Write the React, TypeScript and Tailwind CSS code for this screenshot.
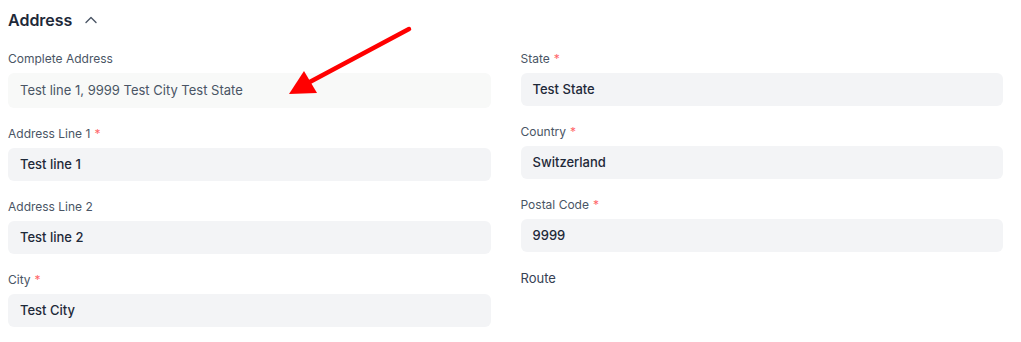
import { ReactNode } from 'react';

type Field = {
  label: string;
  value?: string;
  required?: boolean;
  readOnly?: boolean;
  plain?: boolean;
};

const LEFT: Field[] = [
  { label: 'Complete Address', value: 'Test line 1, 9999 Test City Test State', readOnly: true },
  { label: 'Address Line 1', value: 'Test line 1', required: true },
  { label: 'Address Line 2', value: 'Test line 2' },
  { label: 'City', value: 'Test City', required: true }
];

const RIGHT: Field[] = [
  { label: 'State', value: 'Test State', required: true },
  { label: 'Country', value: 'Switzerland', required: true },
  { label: 'Postal Code', value: '9999', required: true },
  { label: 'Route', plain: true }
];

function FieldBlock({ field }: { field: Field }): ReactNode {
  if (field.plain) {
    return <div className="text-[13px] leading-4 text-gray-700">{field.label}</div>;
  }
  return (
    <div>
      <div className="text-xs leading-4 text-gray-600 mb-[6px]">
        {field.label}
        {field.required && <span className="text-red-400 ml-1">*</span>}
      </div>
      {field.readOnly ? (
        <div className="h-[35px] rounded-md bg-[#f8f9f8] px-3 flex items-center text-[13px] text-gray-600">
          {field.value}
        </div>
      ) : (
        <div className="h-[33px] rounded-md bg-gray-100 px-3 flex items-center text-[13px] font-medium text-gray-800">
          {field.value}
        </div>
      )}
    </div>
  );
}

export default function App() {
  return (
    <div
      className="relative w-[1021px] h-[342px] bg-white pl-2 pr-[18px] pt-2 overflow-hidden"
      style={{ fontFamily: 'Inter, "Noto Sans", sans-serif' }}
    >
      <div className="flex items-center gap-3 h-6 mb-[19px]">
        <h2 className="text-base font-semibold text-gray-800">Address</h2>
        <svg width="14" height="14" viewBox="0 0 14 14" fill="none" className="text-gray-600">
          <path d="M2 9.5 7 4.5l5 5" stroke="currentColor" strokeWidth="1.4" strokeLinecap="round" strokeLinejoin="round" />
        </svg>
      </div>

      <div className="grid grid-cols-2 gap-x-[30px]">
        <div className="flex flex-col gap-[18px]">
          {LEFT.map((f) => (
            <FieldBlock key={f.label} field={f} />
          ))}
        </div>
        <div className="flex flex-col gap-[18px]">
          {RIGHT.map((f) => (
            <FieldBlock key={f.label} field={f} />
          ))}
        </div>
      </div>

      {/* annotation arrow */}
      <svg className="absolute left-0 top-0 pointer-events-none" width="1021" height="342">
        <line x1="409" y1="29" x2="306" y2="84" stroke="#ff0000" strokeWidth="4.5" strokeLinecap="round" />
        <polygon points="289,94 304,71 317,93" fill="#ff0000" />
      </svg>
    </div>
  );
}
